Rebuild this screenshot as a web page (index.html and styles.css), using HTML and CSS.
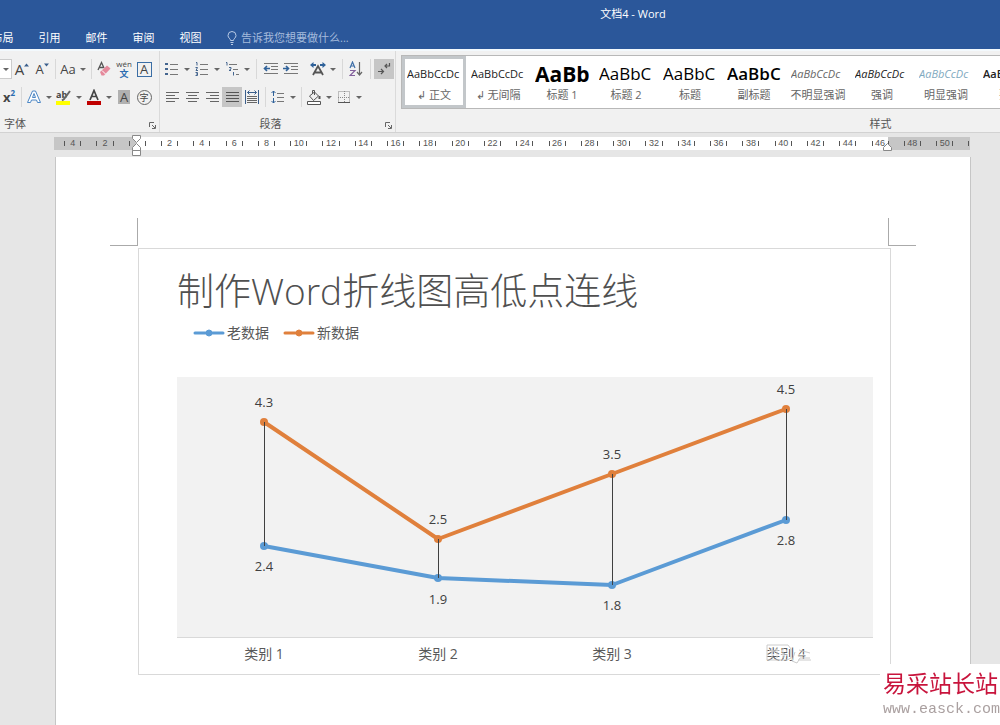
FILE: index.html
```
<!DOCTYPE html>
<html lang="zh-CN">
	<head>
		<meta charset="UTF-8">
		<meta name="viewport" content="width=device-width, initial-scale=1">
		<title>文档4 - Word</title>
		<link rel="stylesheet" href="styles.css">
	</head>
	<body>
		<header>
			<h1>文档4 - Word</h1>
			<nav>
				<button type="button">布局</button>
				<button type="button">引用</button>
				<button type="button">邮件</button>
				<button type="button">审阅</button>
				<button type="button">视图</button>
				<label class="tellme">
					<svg width="10" height="14" viewBox="0 0 10 14" fill="none" stroke="#b9cbe6"><path d="M3.5 9.5C3.5 7.5 1 7 1 4.5a4 4 0 0 1 8 0C9 7 6.500 7.500 6.500 9.500zM3.500 11.500h3M4 13.500h2"/></svg>
					<input type="text" aria-label="操作说明搜索" placeholder="告诉我您想要做什么...">
				</label>
			</nav>
		</header>

		<section class="ribbon">
			<div class="group font">
				<div class="row">
					<button type="button" class="combo" aria-label="字号"><i class="caret"></i></button>
					<button type="button" aria-label="增大字号"><span class="grow">A</span><svg width="5" height="12" viewBox="0 0 5 12"><path d="M0 3.500 2.500 0.500 5 3.500z" fill="#3b5f8c"/></svg></button>
					<button type="button" aria-label="减小字号"><span class="shrink">A</span><svg width="5" height="12" viewBox="0 0 5 12"><path d="M0 0.500h5L2.500 3.500z" fill="#3b5f8c"/></svg></button>
					<i class="sep"></i>
					<button type="button" class="dd" aria-label="更改大小写"><span class="case">Aa</span><i class="caret"></i></button>
					<i class="sep"></i>
					<button type="button" aria-label="清除格式"><svg width="16" height="16" viewBox="0 0 16 16"><path d="M2 9 5.500 1.500 8 7M3.500 6.500h4" fill="none" stroke="#555" stroke-width="1.300"/><path d="M4 11 11 4.500l3.500 3L8 14.500H5.500z" fill="#e58a9c"/><path d="M6 9.500 9.500 13" stroke="#fff"/></svg></button>
					<button type="button" class="pinyin" aria-label="拼音指南"><span>wén</span><b>文</b></button>
					<button type="button" aria-label="字符边框"><span class="boxed">A</span></button>
				</div>
				<div class="row">
					<button type="button" class="sup" aria-label="上标">x<sup>2</sup></button>
					<i class="sep"></i>
					<button type="button" class="dd" aria-label="文本效果"><svg width="16" height="16" viewBox="0 0 16 16" fill="#fff" stroke="#4a86c5" stroke-linejoin="round"><path d="M1.500 13.500 6.500 2h3l5 11.500h-3L10.500 11h-5l-1 2.500zM6.500 8.500h3L8 4.500z"/></svg><i class="caret"></i></button>
					<button type="button" class="dd" aria-label="突出显示"><svg width="16" height="16" viewBox="0 0 16 16"><path d="M0 12h14v4H0z" fill="#ffff00"/><text x="0" y="9" font-size="9" font-weight="700" fill="#444">ab</text><path d="M14 2 8 10l-2 1.500" fill="none" stroke="#666" stroke-width="2"/></svg><i class="caret"></i></button>
					<button type="button" class="dd" aria-label="字体颜色"><svg width="16" height="16" viewBox="0 0 16 16"><path d="M1 12h14v4H1z" fill="#c00000"/><path d="M4 11 8 1.500 12 11M5.500 7.500h5" fill="none" stroke="#444" stroke-width="1.700"/></svg><i class="caret"></i></button>
					<button type="button" aria-label="字符底纹"><span class="shaded">A</span></button>
					<button type="button" aria-label="带圈字符"><span class="circled">字</span></button>
				</div>
				<h2>字体</h2>
				<button type="button" class="launcher" aria-label="字体设置"><svg width="7" height="7" viewBox="0 0 7 7" fill="none" stroke="#666"><path d="M0.500 5V0.500H5M3 3l3 3M6.500 3v3.500H3"/></svg></button>
			</div>

			<div class="group para">
				<div class="row wide">
					<button type="button" class="dd" aria-label="项目符号"><svg width="14" height="14" viewBox="0 0 14 14"><path d="M0 1h3v2H0zM0 6h3v2H0zM0 11h3v2H0z" fill="#44658f"/><path d="M5 2.500h8M5 7.500h8M5 12.500h8" stroke="#777"/></svg><i class="caret"></i></button>
					<button type="button" class="dd" aria-label="编号"><svg width="14" height="14" viewBox="0 0 14 14" fill="none" stroke="#44658f"><path d="M1 0.500h1v3M0.500 5.500h2L1 8.500h2M0.500 10.500h2v3h-2M1 12h1"/><path d="M5 2.500h8M5 7.500h8M5 12.500h8" stroke="#777"/></svg><i class="caret"></i></button>
					<button type="button" class="dd" aria-label="多级列表"><svg width="14" height="14" viewBox="0 0 14 14" fill="none" stroke="#44658f"><path d="M1 0.500h1v3M4 5.500h2v1.500L4 8.500h2M8.500 10v3.500"/><path d="M4 2.500h8M8 7.500h5M11 12.500h3" stroke="#777"/></svg><i class="caret"></i></button>
					<i class="sep"></i>
					<button type="button" aria-label="减少缩进"><svg width="15" height="12" viewBox="0 0 15 12" fill="none" stroke="#777"><path d="M1 0.500h14M8 3.500h7M8 6.500h7M1 10.500h14"/><path d="M7 5.500H1.500M4 3 1.500 5.500 4 8" stroke="#2f6199" stroke-width="1.600"/></svg></button>
					<button type="button" aria-label="增加缩进"><svg width="15" height="12" viewBox="0 0 15 12" fill="none" stroke="#777"><path d="M1 0.500h14M8 3.500h7M8 6.500h7M1 10.500h14"/><path d="M0 5.500h5.500M3 3l2.500 2.500L3 8" stroke="#2f6199" stroke-width="1.600"/></svg></button>
					<i class="sep blank"></i>
					<button type="button" class="dd" aria-label="中文版式"><svg width="16" height="14" viewBox="0 0 16 14"><path d="M3 13 8 4l5 9M5 10.500h6" fill="none" stroke="#555" stroke-width="1.800"/><path d="M0 3 3.500 0v2H6v2H3.500v2zM16 3l-3.500-3v2H10v2h2.500v2z" fill="#2f6199"/></svg><i class="caret"></i></button>
					<i class="sep"></i>
					<button type="button" aria-label="排序"><svg width="14" height="16" viewBox="0 0 14 16" fill="none" stroke-width="1.200"><path d="M1 7 3.500 1 6 7M2 5h3" stroke="#3f6fa8"/><path d="M1 9.500h5L1 14.500h5" stroke="#83609c"/><path d="M10.500 1v13M8 11l2.500 3L13 11" stroke="#666"/></svg></button>
					<i class="sep"></i>
					<button type="button" class="on" aria-label="显示编辑标记"><svg width="14" height="14" viewBox="0 0 14 14" fill="none" stroke="#555" stroke-width="1.200"><path d="M12.500 1v3H8M10 2 8 4l2 2M1 9.500h5M4 7l2.500 2.500L4 12"/></svg></button>
				</div>
				<div class="row">
					<button type="button" aria-label="左对齐"><svg width="13" height="11" viewBox="0 0 13 11" stroke="#666"><path d="M0 0.500h13M0 3.500h9M0 6.500h13M0 9.500h9"/></svg></button>
					<button type="button" aria-label="居中"><svg width="13" height="11" viewBox="0 0 13 11" stroke="#666"><path d="M0 0.500h13M2 3.500h9M0 6.500h13M2 9.500h9"/></svg></button>
					<button type="button" aria-label="右对齐"><svg width="13" height="11" viewBox="0 0 13 11" stroke="#666"><path d="M0 0.500h13M4 3.500h9M0 6.500h13M4 9.500h9"/></svg></button>
					<button type="button" class="on" aria-label="两端对齐"><svg width="13" height="11" viewBox="0 0 13 11" stroke="#555"><path d="M0 0.500h13M0 3.500h13M0 6.500h13M0 9.500h13"/></svg></button>
					<button type="button" aria-label="分散对齐"><svg width="14" height="14" viewBox="0 0 14 14" fill="none" stroke="#3b5f8c"><path d="M0.500 0v14M13.500 0v14M2.500 2.500h9M4.500 0.500l-2 2 2 2M9.500 0.500l2 2-2 2"/><path d="M2 6.500h10M2 8.500h10M2 10.500h10M2 12.500h10" stroke="#666"/></svg></button>
					<i class="sep"></i>
					<button type="button" class="dd" aria-label="行距"><svg width="14" height="14" viewBox="0 0 14 14" fill="none" stroke="#777"><path d="M6 3.500h7M6 7.500h7M6 11.500h7"/><path d="M2.500 1v5M0.500 3l2-2 2 2M2.500 8v5M0.500 11l2 2 2-2" stroke="#2f6199"/></svg><i class="caret"></i></button>
					<i class="sep"></i>
					<button type="button" class="dd" aria-label="底纹"><svg width="15" height="15" viewBox="0 0 15 15" fill="none" stroke="#555"><path d="M0.500 11.500h13v3H0.500z" fill="#fff"/><path d="M2.500 6 7.500 2l4 4-5 4.500zM5.500 4V0.500h2V5"/><path d="M12.500 6v3" stroke-width="2"/></svg><i class="caret"></i></button>
					<button type="button" class="dd" aria-label="边框"><svg width="12" height="12" viewBox="0 0 12 12" fill="none" stroke="#888"><path d="M0.500 0.500h11v11H0.500zM6.500 0v12M0 6.500h12" stroke-dasharray="1 1"/><path d="M0 11.500h12" stroke="#555"/></svg><i class="caret"></i></button>
				</div>
				<h2>段落</h2>
				<button type="button" class="launcher" aria-label="段落设置"><svg width="7" height="7" viewBox="0 0 7 7" fill="none" stroke="#666"><path d="M0.500 5V0.500H5M3 3l3 3M6.500 3v3.500H3"/></svg></button>
			</div>

			<div class="group styles">
				<div class="gallery">
					<button type="button" class="selected"><span>AaBbCcDc</span>↲ 正文</button>
					<button type="button"><span>AaBbCcDc</span>↲ 无间隔</button>
					<button type="button"><span class="h1">AaBb</span>标题 1</button>
					<button type="button"><span class="h2">AaBbC</span>标题 2</button>
					<button type="button"><span class="h2">AaBbC</span>标题</button>
					<button type="button"><span class="h2 bold">AaBbC</span>副标题</button>
					<button type="button"><span class="em subtle">AaBbCcDc</span>不明显强调</button>
					<button type="button"><span class="em">AaBbCcDc</span>强调</button>
					<button type="button"><span class="em intense">AaBbCcDc</span>明显强调</button>
					<button type="button"><span class="strong">AaBbCcDc</span>要点</button>
				</div>
				<h2>样式</h2>
			</div>
		</section>

		<main>
			<div class="ruler">
				<div class="scale" id="scale"></div>
				<svg class="indent left" width="9" height="22" viewBox="0 0 9 22" fill="#fff" stroke="#888"><path d="M0.500 0.500h8v3l-4 4-4-4zM0.500 15.500v-3l4-4 4 4v3zM0.500 15.500h8v5h-8z"/></svg>
				<svg class="indent right" width="9" height="22" viewBox="0 0 9 22" fill="#fff" stroke="#888"><path d="M0.500 15.500v-3l4-4 4 4v3z"/></svg>
			</div>

			<article>
				<div class="corners"><i></i><i></i></div>
				<figure>
					<h3>制作Word折线图高低点连线</h3>
					<ul>
						<li><svg width="32" height="8" viewBox="0 0 32 8" fill="#5b9bd5" stroke="#5b9bd5"><path d="M2 4h28" stroke-width="3" stroke-linecap="round"/><circle cx="16" cy="4" r="3"/></svg>老数据</li>
						<li><svg width="32" height="8" viewBox="0 0 32 8" fill="#e0803c" stroke="#e0803c"><path d="M2 4h28" stroke-width="3" stroke-linecap="round"/><circle cx="16" cy="4" r="3"/></svg>新数据</li>
					</ul>
					<svg class="plot" viewBox="0 0 696 260">
						<g class="old">
							<polyline points="87,169 261,201 435,208 609,143"/>
							<circle cx="87" cy="169" r="4"/><circle cx="261" cy="201" r="4"/><circle cx="435" cy="208" r="4"/><circle cx="609" cy="143" r="4"/>
						</g>
						<g class="new">
							<polyline points="87,45 261,162 435,97 609,32"/>
							<circle cx="87" cy="45" r="4"/><circle cx="261" cy="162" r="4"/><circle cx="435" cy="97" r="4"/><circle cx="609" cy="32" r="4"/>
						</g>
						<path class="hilo" d="M87 45v124M261 162v39M435 97v111M609 32v111"/>
						<g class="values">
							<text x="87" y="30">4.3</text><text x="261" y="147">2.5</text><text x="435" y="82">3.5</text><text x="609" y="17">4.5</text>
							<text x="87" y="194">2.4</text><text x="261" y="227">1.9</text><text x="435" y="233">1.8</text><text x="609" y="168">2.8</text>
						</g>
					</svg>
					<div class="categories">
						<span>类别 1</span>
						<span>类别 2</span>
						<span>类别 3</span>
						<span class="smudged">类别 4<svg width="48" height="24" viewBox="0 0 48 24" fill="none" stroke="#ccc"><path d="M2 3h21l3 4v9l-4 2H2zM7 6v10M12 6v10M18 6v10M30 10l-3 9 5 2 3-5h10M34 8l11 3M33 18h13" /><path d="M4 9h20M4 13h20M31 13h14" stroke="#fff"/></svg></span>
					</div>
				</figure>
			</article>
		</main>

		<aside>
			<strong>易采站长站</strong>
			<a href="#">www.easck.com</a>
		</aside>

		<script>
			// one cell per two characters, counted outwards from the left margin
			for (let n = -4; n <= 52; n += 2) {
				document.querySelector('#scale').innerHTML += `<span><b>${n == 0 ? '' : Math.abs(n)}</b></span>`;
			}
		</script>
	</body>
</html>
```
FILE: styles.css
```
* {
	box-sizing: border-box;
}
body {
	display: flex;
	flex-direction: column;
	min-height: 100vh;
	margin: 0;
	overflow-x: hidden;
	background: #e6e6e6;
	color: #555;
	font-family: "Open Sans", "Noto Sans CJK SC", sans-serif;
	font-size: 11px;
	line-height: 16px;
}
button, input {
	margin: 0;
	padding: 0;
	border: 0;
	background: none;
	color: inherit;
	font: inherit;
}
h1, h2, h3, ul, figure {
	margin: 0;
	padding: 0;
	font-size: inherit;
	font-weight: normal;
}
svg {
	display: block;
	flex: none;
}

/* title bar and tabs */
header {
	height: 49px;
	background: #2b579a;
	color: #fff;
}
header h1 {
	padding: 6px 0 6px 266px;
	text-align: center;
}
nav {
	display: flex;
	height: 20px;
	margin-left: -21px;
}
nav button {
	flex: none;
	width: 47px;
}
.tellme {
	display: flex;
	align-items: center;
	gap: 4px;
	margin-left: 13px;
}
.tellme input {
	width: 120px;
}
.tellme input::placeholder {
	color: #a5bbdc;
	opacity: 1;
}

/* ribbon */
.ribbon {
	display: flex;
	height: 84px;
	overflow: hidden;
	border-top: 2px solid #f3f9fd;
	border-bottom: 1px solid #d2d2d2;
	background: #f1f1f1;
}
.group {
	position: relative;
	display: flex;
	flex: none;
	flex-direction: column;
	gap: 6px;
	padding-top: 7px;
	border-right: 1px solid #dadada;
}
.group h2 {
	margin-top: 2px;
	text-align: center;
}
.font {
	width: 160px;
}
.font h2 {
	padding-left: 4px;
	text-align: left;
}
.para {
	width: 236px;
	padding-left: 2px;
}
.para h2 {
	padding-right: 16px;
}
.row {
	display: flex;
	align-items: center;
	height: 22px;
	color: #444;
}
.row button {
	display: flex;
	flex: none;
	align-items: center;
	justify-content: center;
	width: 20px;
	height: 20px;
}
.row .dd {
	display: grid;
	grid-template-columns: 20px 10px;
	justify-items: center;
	width: 30px;
}
.row .on {
	background: #c6c6c6;
}
.row .combo {
	width: 12px;
	border: 1px solid #ccc;
	border-left: 0;
	background: #fff;
}
.caret {
	border: 3px solid transparent;
	border-top-color: #666;
	border-bottom: 0;
}
.sep {
	width: 6px;
	height: 20px;
	background: linear-gradient(#d8d8d8, #d8d8d8) center / 1px 100% no-repeat;
}
.wide .sep {
	width: 8px;
}
.sep.blank {
	background: none;
}
.grow {
	font-size: 15px;
}
.shrink {
	font-size: 13px;
}
.case {
	font-size: 13px;
}
.row .pinyin {
	flex-direction: column;
	font-size: 8px;
	line-height: 8px;
}
.pinyin b {
	color: #2b6cb0;
	font-size: 9px;
	line-height: 11px;
}
.boxed {
	width: 15px;
	border: 1px solid #3b6ea5;
	font-size: 13px;
	line-height: 13px;
}
.row .sup {
	width: 18px;
	font-size: 13px;
	font-weight: 700;
}
.sup sup {
	align-self: flex-start;
	color: #2b6cb0;
	font-size: 8px;
	line-height: 12px;
}
.shaded {
	width: 12px;
	background: #b1b1b1;
	font-size: 13px;
	line-height: 14px;
}
.circled {
	width: 15px;
	border: 1px solid #666;
	border-radius: 50%;
	font-size: 9px;
	line-height: 13px;
}
.launcher {
	position: absolute;
	right: 3px;
	bottom: 3px;
}

/* style gallery */
.styles {
	width: 970px;
	gap: 0;
	padding: 4px 5px 0;
}
.styles h2 {
	margin-top: 7px;
}
.gallery {
	display: flex;
	height: 54px;
	border: 1px solid #b8b8b8;
	background: #fff;
}
.gallery button {
	display: flex;
	flex: none;
	flex-direction: column;
	align-items: center;
	width: 64px;
	padding-top: 5px;
	color: #666;
	white-space: nowrap;
}
.gallery .selected {
	padding-top: 2px;
	border: 3px solid #c3c7ca;
}
.gallery span {
	width: 54px;
	height: 26px;
	overflow: hidden;
	color: #222;
	font-size: 11px;
	line-height: 26px;
	text-align: left;
}
.gallery .h1 {
	color: #000;
	font-size: 21px;
	font-weight: 700;
}
.gallery .h2 {
	color: #000;
	font-size: 17px;
}
.gallery .bold {
	font-weight: 600;
}
.gallery .em {
	font-style: italic;
}
.gallery .subtle {
	color: #666;
}
.gallery .intense {
	color: #7fa9c0;
}
.gallery .strong {
	font-weight: 600;
}

/* ruler */
main {
	display: flex;
	flex: 1;
	flex-direction: column;
}
.ruler {
	position: relative;
	margin: 4px 30px 7px 54px;
}
.scale {
	display: flex;
	height: 13px;
	padding-left: 2px;
	overflow: hidden;
	background: linear-gradient(90deg, #c6c6c6 9%, #fff 9%, #fff 91%, #c6c6c6 91%);
}
.scale span {
	display: flex;
	flex: none;
	align-items: center;
	justify-content: center;
	width: 3.535%;
}
.scale b {
	width: 50%;
	height: 5px;
	border: 1px solid #555;
	border-width: 0 0 0 1px;
	box-shadow: 1px 0 #555;
	font: 9px/5px "Liberation Sans", sans-serif;
	text-align: center;
}
.indent {
	position: absolute;
	top: -2px;
}
.indent.left {
	left: calc(9% - 4px);
}
.indent.right {
	right: calc(9% - 4px);
}

/* page */
article {
	flex: 1;
	margin: 0 29px 0 55px;
	padding: 61px 79px 51px 82px;
	border: 1px solid #c6c6c6;
	border-width: 0 1px;
	background: #fff;
}
.corners {
	display: flex;
	justify-content: space-between;
	margin: 0 -25px 2px -28px;
}
.corners i {
	width: 28px;
	height: 28px;
	border: 1px solid #aaa;
	border-width: 0 1px 1px 0;
}
.corners i:last-child {
	border-width: 0 0 1px 1px;
}
figure {
	padding: 20px 17px 10px 38px;
	border: 1px solid #d9d9d9;
	color: #595959;
}
h3 {
	color: #505050;
	font-size: 37px;
	font-weight: 300;
	line-height: 44px;
}
ul {
	display: flex;
	gap: 14px;
	margin: 10px 0 34px 16px;
	list-style: none;
}
li {
	display: flex;
	align-items: center;
	gap: 2px;
	font-size: 14px;
	line-height: 20px;
}
.plot {
	width: 100%;
	border-bottom: 1px solid #d9d9d9;
	background: #f2f2f2;
}
.plot polyline {
	fill: none;
	stroke-width: 4;
	stroke-linejoin: round;
}
.old {
	fill: #5b9bd5;
	stroke: #5b9bd5;
}
.new {
	fill: #e0803c;
	stroke: #e0803c;
}
.plot circle {
	stroke: none;
}
.hilo {
	stroke: #404040;
	shape-rendering: crispEdges;
}
.values {
	fill: #404040;
	font-size: 13px;
	text-anchor: middle;
}
.categories {
	display: grid;
	grid-template-columns: repeat(4, 1fr);
	margin-top: 6px;
	font-size: 14px;
	line-height: 20px;
	text-align: center;
}
.smudged {
	position: relative;
}
.smudged svg {
	position: absolute;
	top: -2px;
	left: calc(50% - 21px);
}

/* site mark */
aside {
	position: fixed;
	right: 0;
	bottom: 0;
	width: 120px;
	height: 61px;
	padding: 5px 0 0 3px;
	background: #fff;
	white-space: nowrap;
}
aside strong, aside a {
	display: block;
}
aside strong {
	color: #c8143c;
	font-size: 23px;
	font-weight: 400;
	line-height: 28px;
}
aside a {
	color: #aaa0a0;
	font: 15px/26px "Liberation Mono", monospace;
	text-decoration: none;
}
```
